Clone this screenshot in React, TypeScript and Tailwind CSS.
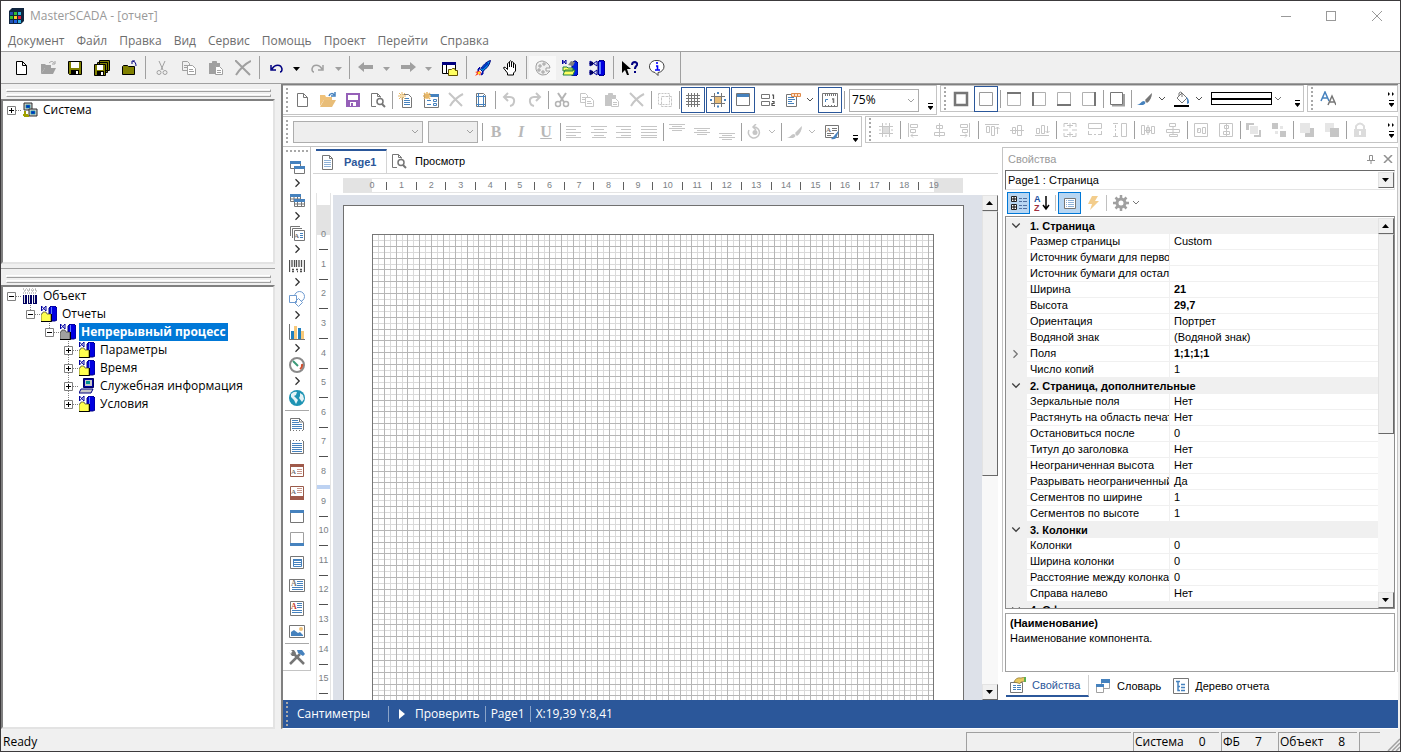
import type { ReactNode } from 'react';
import clsx from 'clsx';

const G = '#767676';
const D = '#c6c6c6';
const B = '#4682be';

const trash = (c: string) => (
    <path d="M1 1l13 13M15 2C9 5 5 9 2 14" stroke={c} strokeWidth="2" />
);
const sheet = (c: string) => <path d="M3.5 1.5h6l4 4v9h-10zM9.5 1.5v4h4" stroke={c} />;
const scissors = (c: string) => (
    <g stroke={c}>
        <path d="M4 1l6 9M12 1l-6 9" strokeWidth="2" />
        <circle cx="4" cy="12" r="2.500" strokeWidth="1.500" />
        <circle cx="12" cy="12" r="2.500" strokeWidth="1.500" />
    </g>
);
const copies = (c: string) => (
    <g stroke={c}>
        <path d="M1.5 1.5h5l2 2v7h-7zM3 5.500h4M3 7.500h4" />
        <path d="M6.500 5.500h5l3 3v6h-8z" fill="white" />
        <path d="M8 9.500h4M8 11.500h5" />
    </g>
);
const clip = (c: string) => (
    <g stroke={c}>
        <path d="M1 3h11v11H1z" fill={c} stroke="none" />
        <path d="M4.500 1.500h4v2h-4z" fill={c} />
        <path d="M7.500 6.500h4l3 3v5h-7z" fill="white" />
        <path d="M9 10.500h4M9 12.500h4" />
    </g>
);
const floppy = (c: string, body: string) => (
    <g>
        <path d="M1.500 1.500h13v13h-12l-1-1z" fill={body} stroke={c} />
        <path d="M4 2h8v6H4z" fill="white" />
        <path d="M4 10h8v4H4z" fill={c} />
        <path d="M9 11h2v3H9z" fill="white" />
    </g>
);
const brush = (c: string, tip: string) => (
    <g>
        <path d="M15 2l-5 8-2-1z" fill={c} />
        <path d="M15 2c0 4-2 8-5 10l-2-2z" fill={c} />
        <path d="M0 14c4-1 4-4 7-4 2 1 2 3-1 4z" fill={tip} />
    </g>
);
const magnifier = (
    <g stroke={G}>
        <path d="M6 14.500H1.500v-13h6l3 3v1M7.500 1.500v3h3" />
        <circle cx="10" cy="9.500" r="3" fill="white" strokeWidth="1.500" />
        <path d="M12 12l3 3" strokeWidth="2" />
    </g>
);
const cylinder = (x: number) => (
    <g>
        <path d={`M${x} 2l2-2h3l2 2v12l-2 2h-3l-2-2z`} fill="#0000e0" stroke="#000060" />
        <path d={`M${x + 2} 2v12`} stroke="#6080ff" strokeWidth="2" />
    </g>
);
const folderCyl = (fill: string) => (
    <g>
        <path d="M8 2l2-2h4l2 2v12l-2 1H8z" fill="#0000e0" stroke="#000080" />
        <path d="M10.500 1v11" stroke="#6080ff" />
        <path d="M.5 0v5l4.500-5v5z" stroke="#0000a0" />
        <path d="M0 8h1l1-2h3l1 2h4v8H0z" fill={fill} stroke="#202020" strokeWidth=".6" />
        <path d="M0 15.500h10.500V8" stroke="black" />
    </g>
);
const monitor = (x: number, y: number) => (
    <g>
        <path d={`M${x} ${y}h8v7h-8z`} fill="#c8c8c8" stroke="#303030" />
        <path d={`M${x + 2} ${y + 2}h4v3h-4z`} fill="#0030c0" stroke="#00a0a0" strokeWidth=".6" />
    </g>
);
const para = (c: string, rows: number[][]) => (
    <path d={rows.map(([x, y, w]) => `M${x} ${y + 0.5}h${w}`).join('')} stroke={c} />
);
const letter = (c: string, x = 1, y = 9, size = 8) => (
    <text x={x} y={y} fontSize={size} fontWeight="bold" fill={c} stroke="none" className="font-['Liberation_Serif',serif]">A</text>
);

const icons: Record<string, ReactNode> = {
    logo: (
        <g>
            <path d="M1 3l3-3h12v13l-3 3H1z" fill="#10253f" />
            <path d="M2 4h3v3H2zM2 12h3v3H2z" fill="#2050b0" />
            <path d="M6 4h3v3H6zM2 8h3v3H2z" fill="#30c030" />
            <path d="M10 4h3v3h-3zM10 12h3v3h-3z" fill="#30b0e0" />
            <path d="M6 8h3v3H6z" fill="#ffd020" />
            <path d="M10 8h3v3h-3z" fill="#e02040" />
            <path d="M6 12h3v3H6z" fill="#2060e0" />
        </g>
    ),
    // classic toolbar
    newFile: <path d="M3.500 1.500h6l4 4v9h-10zM9.500 1.500v4h4" stroke="black" fill="white" />,
    openGray: (
        <g>
            <path d="M1 14V4h4l1 1h5v3H5z" fill="#a0a0a0" />
            <path d="M1 14l4-6h11l-3 6z" fill="#a0a0a0" />
            <path d="M9 3c2-2 4-2 5 0m1-2v3h-3" stroke="#a0a0a0" />
        </g>
    ),
    saveOld: floppy('black', '#808000'),
    saveAll: (
        <g>
            <path d="M5.500 .5h10v10h-10zM3.500 2.500h10v10h-10z" fill="#808000" stroke="black" />
            <path d="M.5 4.500h11v11H.5z" fill="#808000" stroke="black" />
            <path d="M3 5h6v5H3z" fill="white" />
            <path d="M3 11h7v4H3z" fill="black" />
            <path d="M7 12h2v3H7z" fill="white" />
        </g>
    ),
    folderUp: (
        <g>
            <path d="M1.500 14.500v-8l1-1h4l1 1h6v8z" fill="#808000" stroke="black" />
            <path d="M15 6c0-3-1-4-3-5m-1 3V1h3" stroke="#000080" />
        </g>
    ),
    cutOld: (
        <g stroke="#a0a0a0">
            <path d="M5 1l4 9M11 1L7 10" />
            <circle cx="5" cy="12.500" r="2" />
            <circle cx="11" cy="12.500" r="2" />
        </g>
    ),
    copyOld: copies('#a0a0a0'),
    pasteOld: clip('#a0a0a0'),
    deleteOld: <path d="M0 0l15 15M16 1C10 4 5 9 1 15" stroke="#a0a0a0" strokeWidth="2" />,
    undoOld: <path d="M3 5v5h5M4 9c3-5 9-5 10 0 0 2-1 3-2 3" stroke="#000080" strokeWidth="1.500" />,
    redoOld: <path d="M13 5v5H8M12 9C9 4 3 4 2 9c0 2 1 3 2 3" stroke="#a0a0a0" strokeWidth="1.500" />,
    back: <path d="M0 7l6-5v3h9v4H6v3z" fill="#a0a0a0" />,
    forward: <path d="M16 7l-6-5v3H1v4h9v3z" fill="#a0a0a0" />,
    winFolder: (
        <g>
            <path d="M.5 2.500h13v11H.5z" fill="white" stroke="black" />
            <path d="M0 2h14v3H0z" fill="#000080" />
            <path d="M4.500 5v8" stroke="black" />
            <path d="M6.500 15.500v-6h3l1-1h2l1 2h2v5z" fill="#ffff60" stroke="#605000" />
        </g>
    ),
    rocket: (
        <g>
            <path d="M15.500 .5c-4 1-8 5-10 9l2 2c4-3 7-6 8-11z" fill="#00a0e0" stroke="#000080" />
            <path d="M5 7l-2 2v3zM8 11v3l-2 1z" fill="#0050c0" stroke="#0000a0" />
            <path d="M7 9l6-6" stroke="#0030c0" strokeWidth="2" />
            <path d="M4 11l-4 1 2 1-2 3 4-2 1 2 1-4z" fill="#ff4020" />
            <path d="M3 12h2v2H3z" fill="#ffe020" />
        </g>
    ),
    hand: (
        <path d="M5.500 8V3.500q1-1.500 2 0V7 1.500q1-1.500 2 0V7 2.500q1-1.500 2 0V8 4.500q1-1.500 2 0V11l-2 2v2h-6v-2l-4-5q0-1.500 2-.500l2 2z" fill="white" stroke="black" />
    ),
    palette: (
        <g stroke="#a0a0a0">
            <path d="M2 3q5-4 10 0 3 2 3 5h-4v3h4q-3 5-8 4Q0 13 1 6z" fill="#f0f0f0" />
            <path d="M4 5h2v2H4zM8 3h2v2H8zM3 9h2v2H3zM7 11h2v2H7z" />
        </g>
    ),
    folderCylOpen: (
        <g>
            <path d="M10 3l2-2h2l2 2v11l-2 2h-4z" fill="#0020e0" stroke="#000080" />
            <path d="M.5 0v4L4 0v4z" stroke="#0000a0" />
            <path d="M1 7h4l1 1h5v3H1zM1 15l2-5h10l-2 5z" fill="#ffff60" stroke="#208040" />
            <path d="M6 5l3-4 4 1-2 4z" fill="#808080" />
        </g>
    ),
    cylinders: (
        <g>
            {cylinder(9)}
            <path d="M1 1v5l7-5v5zM1 10v5l7-5v5z" stroke="#0000a0" />
            <circle cx="2.500" cy="3.500" r="2" fill="#000060" />
            <circle cx="2.500" cy="12.500" r="2" fill="#000060" />
        </g>
    ),
    whatsThis: (
        <g>
            <path d="M0 1v12l3-3 2 5h2L5 9h4z" fill="black" />
            <path d="M10 5q0-3 3-3 3 1 2 3-2 2-2 4m0 2v2" stroke="#000080" strokeWidth="2" />
        </g>
    ),
    info: (
        <g>
            <path d="M8 .5a6.500 6 0 0 0-2 12l3 3v-3a6.500 6 0 0 0-1-12z" fill="white" stroke="#404040" />
            <path d="M8 2v2M7 6h1.500v4M6 10h5" stroke="#0000ff" strokeWidth="1.600" />
        </g>
    ),
    // designer toolbar
    page: <path d="M2.500 1.500h6l4 4v9h-10zM8.500 1.500v4h4" stroke={G} />,
    open: (
        <g>
            <path d="M0 14V3h5l1 2h6v3H4z" fill="#f0c27a" />
            <path d="M0 15l4-7h12l-4 7z" fill="#e8bd78" />
            <path d="M9 4c1-3 4-3 5-1m1-3v4h-4" stroke={B} strokeWidth="1.500" />
        </g>
    ),
    save: (
        <g>
            <path d="M2 2h12v12H2z" stroke="#9560b8" strokeWidth="2" />
            <path d="M2 8h12v6H2z" fill="#9560b8" />
            <path d="M5 10h6v4H5z" fill="white" />
            <path d="M6 11h2v3H6z" fill="#9560b8" />
        </g>
    ),
    preview: magnifier,
    newPage: (
        <g>
            <path d="M4.500 2.500h6l3 3v10h-9z" stroke={G} fill="white" />
            {para(B, [[6, 6, 5], [6, 8, 6], [6, 10, 6], [6, 12, 6]])}
            <path d="M4 0v8M0 4h8M1 1l6 6M7 1L1 7" stroke="#e8b765" />
            <circle cx="4" cy="4" r="1.500" fill="#f7dca8" />
        </g>
    ),
    newForm: (
        <g>
            <path d="M1.500 15.500v-13h14v13z" stroke={G} fill="white" />
            <path d="M7 2h9v3H7z" fill={B} />
            <path d="M4 8.500h4M4 12.500h4M10.500 7.500h3v2h-3zM10.500 11.500h3v2h-3z" stroke={B} />
            <path d="M4 0v7M0 4h8M1 1l6 6M7 1L1 7" stroke="#e8b765" strokeWidth="1.500" />
        </g>
    ),
    trash: trash(D),
    pageSetup: (
        <g>
            <path d="M3.500 1.500h7l2 2v11h-9z" stroke={G} />
            <path d="M5.500 1v14M10.500 3v12M3 4.500h10M3 12.500h10" stroke={B} />
        </g>
    ),
    undo: <path d="M7 1L3 5l4 4M3 5h6c6 0 5 8 0 9" stroke={D} strokeWidth="2" />,
    redo: <path d="M10 1l4 4-4 4M14 5H8c-6 0-5 8 0 9" stroke={D} strokeWidth="2" />,
    cut: scissors('#b4b4b4'),
    copy: copies(D),
    paste: clip(D),
    select: (
        <g stroke={D} strokeDasharray="2 1">
            <path d="M1.500 1.500h11v11h-11z" />
            <path d="M4.500 4.500h10v10h-10z" strokeDasharray="3 1" />
        </g>
    ),
    grid: <path d="M3.500 1v14M6.500 1v14M9.500 1v14M12.500 1v14M1 3.500h14M1 6.500h14M1 9.500h14M1 12.500h14" stroke={G} />,
    snap: (
        <g>
            <path d="M4.500 4.500h7v7h-7z" fill="#e8bd78" stroke={G} />
            <path d="M4.500 1v14M11.500 1v14M1 4.500h14M1 11.500h14" stroke={G} />
            <path d="M7 1h2M7 14.500h2M1 7v2M15 7v2" stroke={B} strokeWidth="2" />
        </g>
    ),
    headers: (
        <g>
            <path d="M1.500 1.500h13v12h-13z" stroke={G} />
            <path d="M2 2h12v3H2z" fill={B} />
        </g>
    ),
    order: (
        <g>
            <path d="M1.500 2.500h8v4h-8zM1.500 9.500h8v4h-8z" stroke={G} />
            <path d="M12 3h1.500v4M12 9.500h2v2h-2v2h3" stroke="#505050" strokeWidth="1.200" />
        </g>
    ),
    format: (
        <g>
            <path d="M1.500 2.500h10v12h-10z" stroke={G} />
            {para(B, [[3, 5, 6], [3, 7, 7], [3, 9, 4], [3, 11, 6]])}
            <path d="M6.500 1.500h9v3h-9zM9.500 1v3M12.500 1v3" stroke="#e08a4a" fill="#fde3cd" />
        </g>
    ),
    ruler: (
        <g>
            <path d="M.5 1.500h15v13H.5z" stroke={G} />
            <path d="M3.500 2v2M5.500 2v2M7.500 2v2M9.500 2v2M11.500 2v2M13.500 2v2M3.500 14v-1M6.500 14v-1M9.500 14v-1M12.500 14v-1" stroke={G} />
            <path d="M3.500 10V7.500H6" stroke={B} />
            <path d="M10 7h1.500v4" stroke={G} strokeWidth="1.500" />
        </g>
    ),
    bAll: <path d="M2 2h12v12H2z" stroke={G} strokeWidth="2.500" />,
    bNone: <path d="M1.500 1.500h13v13h-13z" stroke="#9a9a9a" />,
    bTop: <g><path d="M1.500 2.500h13v12h-13z" stroke="#b0b0b0" /><path d="M1 2h14" stroke={G} strokeWidth="2" /></g>,
    bLeft: <g><path d="M2.500 1.500h12v13h-12z" stroke="#b0b0b0" /><path d="M2 1v14" stroke={G} strokeWidth="2" /></g>,
    bBottom: <g><path d="M1.500 1.500h13v12h-13z" stroke="#b0b0b0" /><path d="M1 14h14" stroke={G} strokeWidth="2" /></g>,
    bRight: <g><path d="M1.500 1.500h12v13h-12z" stroke="#b0b0b0" /><path d="M14 1v14" stroke={G} strokeWidth="2" /></g>,
    bShadow: <g><path d="M3 14.500h12V3" stroke="#a0a0a0" strokeWidth="2" /><path d="M1.500 1.500h12v12h-12z" stroke={G} /></g>,
    brush: brush(G, B),
    brushOff: brush(D, D),
    bucket: (
        <g>
            <path d="M3 7l5-5 5 5-5 5zM5 5V2q2-2 3 0v4" stroke={G} />
            <path d="M12 6q3 1 3 6l-2 1q1-4-1-7z" fill={B} />
            <path d="M0 14h15v2H0z" fill="black" />
        </g>
    ),
    fonts: (
        <g strokeWidth="1.500">
            <path d="M1 10l4-9 4 9M2.500 7h5" stroke={B} />
            <path d="M8 14l4-9 4 9M9.500 11h5" stroke={G} />
        </g>
    ),
    left: para(D, [[0, 2, 15], [0, 5, 10], [0, 8, 15], [0, 11, 10], [0, 13, 15]]),
    center: para(D, [[0, 2, 16], [3, 5, 10], [0, 8, 16], [3, 11, 10], [1, 13, 14]]),
    right: para(D, [[0, 2, 15], [5, 5, 10], [0, 8, 15], [5, 11, 10], [0, 13, 15]]),
    justify: para(D, [[0, 2, 16], [0, 5, 16], [0, 8, 16], [0, 11, 16], [0, 13, 16]]),
    vTop: para(D, [[0, 0, 16], [3, 2, 10], [0, 4, 16], [3, 6, 10]]),
    vMid: para(D, [[0, 4, 16], [3, 6, 10], [0, 8, 16], [3, 10, 10]]),
    vBottom: para(D, [[0, 9, 16], [3, 11, 10], [0, 13, 16], [3, 15, 10]]),
    rotate: (
        <g>
            <path d="M7 3a5.500 5.500 0 1 1-5 3M9 0L6 3l3 3" stroke={D} strokeWidth="1.500" />
            <circle cx="8" cy="8.500" r="2.500" fill={D} />
        </g>
    ),
    style: (
        <g>
            <path d="M1.500 1.500h13v12h-13z" stroke={G} />
            {letter(G, 2, 8, 7)}
            {para(G, [[8, 4, 5], [8, 6, 5], [3, 9, 7], [3, 11, 4]])}
            <path d="M15 6l-5 6-3 3q5 1 6-3z" fill={B} />
        </g>
    ),
    alignGrid: (
        <g stroke={D}>
            <path d="M4.500 4.500h7v7h-7z" fill="#dddddd" />
            <path d="M4.500 1v14M11.500 1v14M1 4.500h14M1 11.500h14M8 1v2M8 13v2M1 8h2M13 8h2" />
        </g>
    ),
    aLeft: <path d="M2.500 1v14M4.500 2.500h7v3h-7zM4.500 7.500h5v3h-5zM12 13.500H5l2-2m-2 2l2 2" stroke={D} />,
    aCenter: <path d="M8.500 1v14M5.500 3.500h6v3h-6zM3.500 10.500h10v3h-10z" stroke={D} />,
    aRight: <path d="M13.500 1v14M4.500 2.500h7v3h-7zM6.500 7.500h5v3h-5zM4 13.500h7l-2-2m2 2l-2 2" stroke={D} />,
    aTop: <path d="M1 2.500h14M2.500 4.500h3v6h-3zM7.500 4.500h3v9h-3zM13.500 12V5m-2 2l2-2 2 2" stroke={D} />,
    aMid: <path d="M1 8.500h14M3.500 5.500h3v6h-3zM8.500 3.500h4v10h-4z" stroke={D} />,
    aBottom: <path d="M1 13.500h14M2.500 6.500h3v5h-3zM7.500 3.500h3v8h-3zM13.500 4v7m-2-2l2 2 2-2" stroke={D} />,
    sizeBoth: <path d="M2 5V1.500h4M10 1.500h4V5M2 11v3.500h4M10 14.500h4V11M8 1v5M5 3.500h6M1 8h5M10 8h5M8 10v5M5 12.500h6" stroke={D} />,
    sizeW: <path d="M1.500 1.500h13v5h-13zM1.500 9v4M14.500 9v4M2 12.500h3M7 12.500h2M11 12.500h3" stroke={D} />,
    sizeH: <path d="M9.500 1.500h5v13h-5zM1 1.500h5M1 14.500h5M3.500 3v3M3.500 7v2M3.500 11v3" stroke={D} />,
    spaceH: <path d="M1.500 3.500h3v9h-3zM6.500 5.500h3v5h-3zM11.500 4.500h3v7h-3zM4 8.500h7M8 3v10" stroke={D} />,
    spaceV: <path d="M4.500 1.500h6v3h-6zM1.500 7.500h13v3h-13zM4.500 12.500h8v2h-8zM8 5v7" stroke={D} />,
    ctrH: <path d="M1.500 1.500h13v13h-13zM4 8h2M4.500 6.500h3v4h-3zM9.500 5.500h3v6h-3z" stroke={D} />,
    ctrV: <path d="M1.500 1.500h13v13h-13zM6.500 3.500h4v3h-4zM5.500 9.500h6v3h-6zM8.500 2v12" stroke={D} />,
    toFront: <g><path d="M0 1h8v2H3v5H0z" fill={D} /><path d="M4 4h8v8H4z" fill="#e6e6e6" /><path d="M14 8v6H8" stroke={D} strokeWidth="2" /></g>,
    toBack: <g><path d="M1 1h6v6H1zM9 9h6v6H9z" fill={D} /><path d="M9 4h3v3H9zM4 9h3v3H4z" fill="#e6e6e6" /></g>,
    fwd: <g><path d="M8 6h7v9H6v-3z" fill={D} /><path d="M1 1h10v10H1z" fill="#e6e6e6" /></g>,
    bwd: <g><path d="M1 1h9v9H1z" fill="#e6e6e6" /><path d="M6 6h9v9H6z" fill={D} /></g>,
    lock: (
        <g>
            <path d="M4 7V4q4-5 8 0v3" stroke="#dcdcdc" strokeWidth="2" />
            <path d="M2 7h12v8H2z" fill="#dcdcdc" />
            <path d="M8 9v4" stroke="white" strokeWidth="2" />
        </g>
    ),
    // toolbox
    bands: (
        <g>
            <path d="M1.500 2.500h10v7h-10z" stroke={G} fill="white" />
            <path d="M1 2h11v3H1z" fill={B} />
            <path d="M5.500 7.500h10v7h-10z" stroke={G} fill="white" />
            <path d="M5 7h11v3H5z" fill={B} />
        </g>
    ),
    crossTab: (
        <g>
            <path d="M1.500 2.500h10v7h-10zM5 4v5M8.500 4v5M1 7h10" stroke={G} fill="white" />
            <path d="M1 2h11v3H1z" fill={B} />
            <path d="M5.500 7.500h10v7h-10zM8.500 8v6M12.500 8v6M5 12h10" stroke={G} fill="white" />
            <path d="M5 7h11v3H5z" fill={B} />
        </g>
    ),
    components: (
        <g>
            <path d="M1.500 11V1.500H11M3.500 13V3.500H13" stroke={G} />
            <path d="M5.500 5.500h10v10h-10z" stroke={G} fill="white" />
            {letter(G, 5, 13, 7)}
            {para(B, [[11, 8, 3], [11, 10, 3], [11, 12, 3]])}
        </g>
    ),
    barcode: <path d="M.5 2v12M3 2v7M5.500 2v7M7.500 2v7M10 2v7M12.500 2v7M15.500 2v12M3 11.500h2M7 11.500h2M11 11.500h2M3 13.500h2M8 13.500h1M11 13.500h2" stroke="#505050" strokeWidth="1.300" />,
    shapes: (
        <g stroke="#6f9bd0" fill="white">
            <circle cx="10.500" cy="5.500" r="5" />
            <path d="M.5 4.500h7v7h-7zM9.500 7.500l4 4-4 4-4-4z" />
        </g>
    ),
    chart: (
        <g>
            <path d="M.5 0v15.500H16" stroke={G} />
            <path d="M2 7h3v8H2zM9 4h3v11H9z" fill="#2080c0" />
            <path d="M5 2h3v13H5zM12 7h3v8h-3z" fill="#f8c97a" />
        </g>
    ),
    gauge: (
        <g>
            <circle cx="8" cy="8" r="7" stroke="#8a8a8a" strokeWidth="2" fill="white" />
            <path d="M13 7a5 5 0 0 1-2 5" stroke="#d05030" strokeWidth="2" />
            <path d="M4 4l5 5" stroke="#3a9a78" strokeWidth="2" />
        </g>
    ),
    globe: (
        <g>
            <circle cx="8" cy="8" r="8" fill="#1e94b4" />
            <path d="M2 4q3-3 6-2l-1 3-2 1 2 2 2 2-2 4-2-4-3-3zM11 3l3 2 1 4-2 3-3-4 1-2z" fill="#e4f3f7" />
        </g>
    ),
    bandHead: <g><path d="M1.500 14V2.500h9l4 4V14M1 14.500h1M4 14.500h1M7 14.500h1M10 14.500h1M13 14.500h1M10.500 2v4h4" stroke={G} />{para(B, [[3, 4, 6], [3, 6, 7], [3, 8, 10], [3, 10, 10], [3, 12, 10]])}</g>,
    bandData: <g><path d="M1.500 2v12.500h13V2M1 1.500h1M4 1.500h1M7 1.500h1M10 1.500h1M13 1.500h1" stroke={G} />{para(B, [[3, 4, 10], [3, 6, 10], [3, 8, 10], [3, 10, 10], [3, 12, 10]])}</g>,
    groupHead: <g><path d="M1.500 2.500h13v12h-13z" stroke="#9a5a4a" /><path d="M1 2h14v3H1z" fill="#a05a4a" />{letter(G, 2, 12, 7)}{para('#c8988c', [[8, 7, 5], [8, 9, 5], [8, 11, 5]])}</g>,
    groupFoot: <g><path d="M1.500 1.500h13v12h-13z" stroke="#9a5a4a" /><path d="M1 11h14v4H1z" fill="#a05a4a" />{letter(G, 2, 9, 7)}{para('#c8988c', [[8, 3, 5], [8, 5, 5], [8, 7, 5]])}</g>,
    pageHead: <g><path d="M1.500 2.500h13v12h-13z" stroke={G} /><path d="M1 2h14v3H1z" fill={B} /></g>,
    pageFoot: <g><path d="M1.500 1.500h13v12h-13z" stroke="#a0a0a0" /><path d="M1 12h14v3H1z" fill={B} /></g>,
    panel: <g><path d="M1.500 2.500h13v12h-13z" stroke={G} /><path d="M4.500 5.500h8v7h-8zM5 8.500h7M5 10.500h7" stroke={B} /><path d="M4 5h9v2H4z" fill={B} /></g>,
    text: <g><path d="M.5 2.500h15v12H.5z" stroke={G} />{letter(G, 2, 9, 8)}{para(B, [[8, 4, 6], [8, 6, 6], [8, 8, 6], [3, 10, 11], [3, 12, 11]])}</g>,
    richText: <g><path d="M1.500 1.500h13v14h-13z" stroke={G} />{letter('#c84030', 2, 9, 8)}{para(B, [[8, 3, 5], [8, 5, 5], [8, 7, 5], [3, 10, 10], [3, 12, 10]])}</g>,
    image: <g><path d="M.5 2.500h15v12H.5z" stroke={G} /><path d="M2 13v-4l3-2 4 3 2-1 3 3v1z" fill={B} /><circle cx="12" cy="6" r="2" fill="#f0c27a" /></g>,
    tools: (
        <g>
            <path d="M3 3l12 12" stroke={G} strokeWidth="2.500" />
            <path d="M0 3l2 2 2-2-2-2h3l2 3-1 3H3z" fill={G} />
            <path d="M1 15L11 5" stroke={G} strokeWidth="2.500" />
            <path d="M8 1h5l3 4-2 2-5-3z" fill={B} />
        </g>
    ),
    pageLines: <g><path d="M2.500 1.500h7l3 3v11h-10zM9.500 1.500v3h3" stroke={G} />{para('#8fb2d8', [[4, 6, 7], [4, 8, 7], [4, 10, 7], [4, 12, 7]])}</g>,
    // property grid
    categorized: (
        <g>
            <path d="M.5 1.500h5v5h-5zM.5 9.500h5v5h-5z" stroke="#202020" fill="white" />
            <path d="M1 4h4M3 2v4M1 12h4M3 10v4" stroke="black" />
            <path d="M8 3.500h3M12 3.500h4M8 6.500h3M12 6.500h4M8 10.500h3M12 10.500h4M8 13.500h3M12 13.500h4" stroke="#5070a0" />
        </g>
    ),
    sortAz: (
        <g>
            <text x="0" y="7" fontSize="9" fontWeight="bold" fill="#2050a0" stroke="none">A</text>
            <text x="0" y="16" fontSize="9" fontWeight="bold" fill="#a03040" stroke="none">Z</text>
            <path d="M12 1v13m-3-4l3 4 3-4" stroke="black" strokeWidth="1.500" />
        </g>
    ),
    props: <g><path d="M2.500 3.500h11v10h-11z" stroke={G} fill="white" />{para('#8fb2d8', [[4, 5, 1], [6, 5, 6], [4, 7, 1], [6, 7, 6], [4, 9, 1], [6, 9, 6], [4, 11, 1], [6, 11, 6]])}</g>,
    bolt: <path d="M7 1h6l-3 5h4L5 15l2-6H3z" fill="#f3cd8c" />,
    gear: (
        <g stroke="#a0a0a0">
            <circle cx="8" cy="8" r="4" strokeWidth="3" />
            <path d="M8 0v3M8 13v3M0 8h3M13 8h3M2.500 2.500l2 2M11.500 11.500l2 2M13.500 2.500l-2 2M4.500 11.500l-2 2" strokeWidth="2.500" />
        </g>
    ),
    tabProps: (
        <g>
            <path d="M.5 5.500h12v10H.5z" stroke={G} fill="white" />
            {para(B, [[3, 8, 3], [7, 8, 4], [3, 10, 3], [7, 10, 4], [3, 12, 3], [7, 12, 4]])}
            <path d="M4 5q2-5 7-4l4-1v4l-4 1q-1 3-3 1z" fill="#e8c860" stroke="#8a7430" strokeWidth=".7" />
            <path d="M14 0h2v5h-2z" fill="#60b050" />
        </g>
    ),
    dictionary: (
        <g>
            <path d="M6.500 1.500h8v9h-8z" stroke="#a0a0a0" fill="white" />
            <path d="M6 1h9v4H6z" fill={B} />
            <path d="M1.500 6.500h7v8h-7z" stroke="#a0a0a0" fill="white" />
            <path d="M1 6h8v3H1z" fill={B} />
        </g>
    ),
    treeTab: (
        <g>
            <path d="M.5 .5h15v15H.5z" stroke={G} />
            <path d="M3 3.500h4M5 4v8.500h2M5 8.500h2M8 6.500h4M8 9.500h4M8 12.500h4" stroke={B} strokeWidth="1.500" />
        </g>
    ),
    // trees
    network: (
        <g>
            {monitor(2, 1)}
            {monitor(7, 7)}
            <path d="M3 9v5h4M1 13h5" stroke="#a0a000" strokeWidth="2" />
        </g>
    ),
    plant: (
        <g>
            <path d="M1 7h4v9H1zM6 7h4v9H6zM11 7h4v9h-4z" fill="#000060" />
            <path d="M2.500 7v8M7.500 7v8M12.500 7v8" stroke="#e0e0e0" />
            <path d="M1 1h1M4 0h1M7 1h1M10 0h1M13 1h1M2 3h2M6 3h2M10 3h2M14 3h1M1 5h13M3 2h12" stroke="#909090" strokeDasharray="1 1" />
        </g>
    ),
    objFolder: folderCyl('#ffff50'),
    objFolderGray: folderCyl('#a0a0a0'),
    computer: (
        <g>
            <path d="M4.500 .5h10v9h-10z" fill="#0000a0" stroke="#000060" />
            <path d="M6 2h7v6H6z" fill="#c8c8c8" />
            <path d="M7 3h4v3H7z" fill="#009090" />
            <path d="M2 11h12l-2 4H0z" fill="#c8c8c8" stroke="#000080" />
        </g>
    ),
};

function Icon({ name }: { name: string }) {
    return (
        <svg viewBox="0 0 16 16" fill="none" className="h-4 w-4 shrink-0" aria-hidden="true">
            {icons[name]}
        </svg>
    );
}

function Chevron({ color = G, className = 'h-2 w-2' }: { color?: string; className?: string }) {
    return (
        <svg viewBox="0 0 8 8" fill="none" className={clsx('shrink-0', className)} aria-hidden="true">
            <path d="M1 2l3 3 3-3" stroke={color} />
        </svg>
    );
}

function Triangle({ up, color = 'black' }: { up?: boolean; color?: string }) {
    return (
        <svg viewBox="0 0 8 4" className="h-1 w-2" aria-hidden="true">
            <path d={up ? 'M0 4h7L3.500 0z' : 'M0 0h7L3.500 4z'} fill={color} />
        </svg>
    );
}

/* ---------- classic application toolbar ---------- */

const mainTools = [
    'newFile', 'openGray', 'saveOld', 'saveAll', 'folderUp', '|',
    'cutOld', 'copyOld', 'pasteOld', 'deleteOld', '|',
    'undoOld', 'v', 'redoOld', 'v-', '|',
    'back', 'v-', 'forward', 'v-', 'winFolder', '|',
    'rocket', 'hand', '|',
    'palette', 'folderCylOpen', 'cylinders', '|',
    'whatsThis', 'info',
];

function MainToolbar() {
    return (
        <div className="flex h-[33px] shrink-0 items-center border-y border-t-[#a0a0a0] border-b-[#a0a0a0] bg-[#f0f0f0] pl-1.5">
            {mainTools.map((t, i) => {
                if (t === '|') {
                    return (
                        <span key={i} className="flex w-1.5 justify-center">
                            <span className="h-[23px] w-px bg-[#a0a0a0]" />
                        </span>
                    );
                }
                if (t[0] === 'v' && t.length < 3) {
                    return (
                        <button key={i} aria-label="menu" className="flex h-6 w-[15px] items-center justify-center pt-0.5">
                            <Triangle color={t === 'v' ? 'black' : '#a0a0a0'} />
                        </button>
                    );
                }
                return (
                    <button
                        key={i}
                        aria-label={t}
                        className={clsx('flex h-6 w-[27px] items-center justify-center', t === 'palette' && 'bg-[#f8f8f8]')}
                    >
                        <Icon name={t} />
                    </button>
                );
            })}
            <span className="ml-2.5 h-full w-px bg-[#a0a0a0]" />
        </div>
    );
}

/* ---------- designer toolbars ---------- */

function Grip() {
    return (
        <span className="mx-[3px] flex h-6 w-0.5 shrink-0 flex-col justify-between">
            {[0, 1, 2, 3, 4, 5].map((n) => (
                <span key={n} className="h-0.5 w-0.5 bg-[#a8a8a8]" />
            ))}
        </span>
    );
}

function Sep() {
    return (
        <span className="flex w-[3px] shrink-0 justify-center">
            <span className="h-[18px] w-px bg-[#a0a0a0]" />
        </span>
    );
}

function Tools({ items, active = [] }: { items: string[]; active?: string[] }) {
    return (
        <>
            {items.map((t, i) => {
                if (t === '|') return <Sep key={i} />;
                if (t === 'v' || t === 'v-') {
                    return (
                        <button key={i} aria-label="more" className="flex h-6 w-3 shrink-0 items-center justify-start">
                            <Chevron color={t === 'v' ? '#505050' : '#b8b8b8'} />
                        </button>
                    );
                }
                return (
                    <button
                        key={i}
                        aria-label={t}
                        className={clsx(
                            'mr-px flex h-[26px] w-6 shrink-0 items-center justify-center border',
                            active.includes(t) ? 'border-[#2b579a]' : 'border-transparent',
                        )}
                    >
                        <Icon name={t} />
                    </button>
                );
            })}
        </>
    );
}

function Overflow({ more }: { more?: boolean }) {
    return (
        <button aria-label="overflow" className="ml-auto flex w-3 shrink-0 flex-col items-center gap-1 self-end pb-1">
            {more && (
                <svg viewBox="0 0 7 4" className="h-1 w-[7px]" aria-hidden="true">
                    <path d="M0 0l2 2-2 2zM4 0l2 2-2 2z" fill="black" />
                </svg>
            )}
            <svg viewBox="0 0 7 7" className="h-[7px] w-[7px]" aria-hidden="true">
                <path d="M1 0h5v1H1zM1 3h5v1L3.500 7 1 4z" fill="black" />
            </svg>
        </button>
    );
}

function Bar({ className, children }: { className: string; children: ReactNode }) {
    return <div className={clsx('flex items-center border border-[#c4c4c4] bg-white', className)}>{children}</div>;
}

function Letter({ children, className }: { children: string; className: string }) {
    return (
        <button className={clsx("mr-px h-6 w-6 font-['Liberation_Serif',serif] text-[16px] leading-6 text-[#b8b8b8]", className)}>
            {children}
        </button>
    );
}

function FontSelect({ label, className }: { label: string; className: string }) {
    return (
        <span className={clsx('relative h-[22px] shrink-0', className)}>
            <select aria-label={label} className="h-full w-full appearance-none border border-[#adadad] bg-[#eeeeee]" />
            <Chevron color="#a0a0a0" className="pointer-events-none absolute top-[7px] right-1 h-2 w-2" />
        </span>
    );
}

function DesignerToolbars() {
    return (
        <div className="flex shrink-0 flex-col gap-px">
            <div className="flex items-start gap-[3px]">
                <Bar className="h-[30px] w-[654px] border-l-0">
                    <Grip />
                    <Tools
                        items={[
                            'page', 'open', 'save', 'preview', '|', 'newPage', 'newForm', 'trash', 'pageSetup', '|',
                            'undo', 'redo', '|', 'cut', 'copy', 'paste', 'trash', '|', 'select', '|',
                            'grid', 'snap', 'headers', 'order', 'format', 'v', 'ruler', '|',
                        ]}
                        active={['grid', 'snap', 'headers', 'ruler']}
                    />
                    <span className="relative ml-[3px] h-[23px] w-[70px] shrink-0">
                        <select aria-label="Zoom" className="h-full w-full appearance-none border border-[#adadad] px-0.5 font-['Open_Sans',sans-serif] text-[12px] leading-5 text-black">
                            <option>75%</option>
                        </select>
                        <Chevron color="#a0a0a0" className="pointer-events-none absolute top-2 right-1 h-2 w-2" />
                    </span>
                    <Overflow />
                </Bar>
                <Bar className="h-[27px] w-[364px]">
                    <Grip />
                    <Tools
                        items={['bAll', 'bNone', '|', 'bTop', 'bLeft', 'bBottom', 'bRight', '|', 'bShadow', '|', 'brush', 'v', 'bucket', 'v']}
                        active={['bNone']}
                    />
                    <button aria-label="line style" className="ml-1 flex h-[13px] w-[61px] items-center border border-black">
                        <span className="h-0.5 w-full bg-black" />
                    </button>
                    <Chevron className="ml-0.5 h-2 w-2" />
                    <Overflow />
                </Bar>
                <Bar className="h-[27px] flex-1">
                    <Grip />
                    <Tools items={['fonts']} />
                    <Overflow more />
                </Bar>
            </div>
            <div className="flex items-start gap-[3px]">
                <Bar className="h-[31px] w-[579px] border-l-0">
                    <Grip />
                    <FontSelect label="Font" className="ml-0.5 w-[130px]" />
                    <FontSelect label="Size" className="mr-[3px] ml-[5px] w-[50px]" />
                    <Sep />
                    <Letter className="font-bold">B</Letter>
                    <Letter className="font-bold italic">I</Letter>
                    <Letter className="font-bold underline">U</Letter>
                    <Tools
                        items={[
                            '|', 'left', 'center', 'right', 'justify', '|', 'vTop', 'vMid', 'vBottom', '|',
                            'rotate', 'v-', '|', 'brushOff', 'v-', 'style',
                        ]}
                    />
                    <Overflow />
                </Bar>
                <Bar className="h-[27px] flex-1">
                    <Grip />
                    <Tools
                        items={[
                            'alignGrid', '|', 'aLeft', 'aCenter', 'aRight', '|', 'aTop', 'aMid', 'aBottom', '|',
                            'sizeBoth', 'sizeW', 'sizeH', '|', 'spaceH', 'spaceV', '|', 'ctrH', 'ctrV', '|',
                            'toFront', 'toBack', '|', 'fwd', 'bwd', '|', 'lock',
                        ]}
                    />
                    <Overflow more />
                </Bar>
            </div>
        </div>
    );
}

const toolboxGroups = ['bands', 'crossTab', 'components', 'barcode', 'shapes', 'chart', 'gauge'];
const toolboxItems = ['bandHead', 'bandData', 'groupHead', 'groupFoot', 'pageHead', 'pageFoot', 'panel', 'text', 'richText', 'image'];

function ToolboxButton({ name }: { name: string }) {
    return (
        <button aria-label={name} className="flex h-[23px] w-full items-center justify-center">
            <Icon name={name} />
        </button>
    );
}

function Toolbox() {
    return (
        <div className="flex w-7 shrink-0 flex-col items-center self-start border border-t-0 border-l-0 border-[#c4c4c4] pb-0.5">
            <span className="my-[3px] flex h-0.5 w-[22px] justify-between">
                {[0, 1, 2, 3, 4, 5].map((n) => (
                    <span key={n} className="h-0.5 w-0.5 bg-[#a8a8a8]" />
                ))}
            </span>
            {toolboxGroups.map((name) => (
                <div key={name} className="w-full">
                    <ToolboxButton name={name} />
                    <span className="flex h-2.5 items-center justify-center pl-0.5">
                        <Chevron color="#303030" className="h-2.5 w-2.5 -rotate-90" />
                    </span>
                </div>
            ))}
            <ToolboxButton name="globe" />
            <span className="my-px h-px w-6 bg-[#a8a8a8]" />
            {toolboxItems.map((name) => (
                <ToolboxButton key={name} name={name} />
            ))}
            <span className="my-px h-px w-6 bg-[#a8a8a8]" />
            <ToolboxButton name="tools" />
        </div>
    );
}

/* ---------- scroll bars ---------- */

function ScrollBar({ thumb }: { thumb: string }) {
    const button = 'flex h-4 w-4 shrink-0 items-center justify-center border border-t-[#e3e3e3] border-r-[#696969] border-b-[#696969] border-l-[#e3e3e3] bg-[#f0f0f0]';
    return (
        <div className="flex w-4 shrink-0 flex-col bg-[#f8f8f8]">
            <button aria-label="up" className={button}><Triangle up /></button>
            <div className="min-h-0 flex-1">
                <div className={clsx('border border-t-[#e3e3e3] border-r-[#696969] border-b-[#696969] border-l-[#e3e3e3] bg-[#f0f0f0]', thumb)} />
            </div>
            <button aria-label="down" className={button}><Triangle /></button>
        </div>
    );
}

/* ---------- report page ---------- */

const STEP = 562 / 95;

function PageGrid() {
    const cols = Array.from({ length: 96 }, (_, i) => i);
    const rows = Array.from({ length: 139 }, (_, i) => i);
    return (
        <svg className="block h-[820px] w-[562px]" shapeRendering="crispEdges" aria-hidden="true">
            {[1, 0].map((odd) => (
                <g key={odd} fill={odd ? '#dadada' : '#b6b6b6'}>
                    {cols.filter((i) => i % 2 === odd).map((i) => (
                        <rect key={`c${i}`} x={Math.round(i * STEP)} y="0" width="1" height="820" />
                    ))}
                    {rows.filter((i) => i % 2 === odd).map((i) => (
                        <rect key={`r${i}`} x="0" y={Math.round(i * STEP)} width="562" height="1" />
                    ))}
                </g>
            ))}
            <rect x="0" y="0" width="562" height="1" fill="#767676" />
            <rect x="0" y="0" width="1" height="820" fill="#767676" />
            <rect x="561" y="0" width="1" height="820" fill="#767676" />
        </svg>
    );
}

function HorizontalRuler() {
    return (
        <div className="ml-[30px] flex h-[15px] w-[620px] shrink-0 border-y border-[#e4e4e4] font-['Liberation_Sans',sans-serif] text-[9px] text-[#7b7f86]">
            <span className="w-[29px] bg-[#e3e3e3]" />
            <div className="flex flex-1 items-center justify-between">
                {Array.from({ length: 39 }, (_, i) => (
                    <span key={i} className="flex w-0 justify-center">
                        {i % 2 === 0 ? <span className="relative">{i / 2}</span> : <span className="h-2 w-px shrink-0 bg-[#606060]" />}
                    </span>
                ))}
            </div>
            <span className="w-[29px] bg-[#e3e3e3]" />
        </div>
    );
}

function VerticalRuler() {
    return (
        <div className="mr-0.5 ml-[3px] w-[15px] shrink-0 overflow-hidden border-x border-[#e4e4e4] font-['Liberation_Sans',sans-serif] text-[9px] text-[#7b7f86]">
            <div className="mt-3 h-[30px] bg-[#e3e3e3]" />
            <div className="flex h-[814px] flex-col items-center justify-between">
                {Array.from({ length: 56 }, (_, i) => (
                    <span key={i} className={clsx('flex h-0 w-full items-center justify-center', i === 17 && 'outline-2 outline-[#bdd2f2]')}>
                        {i % 2 === 0 ? i / 2 : <span className="h-px w-[9px] shrink-0 bg-[#505050]" />}
                    </span>
                ))}
            </div>
        </div>
    );
}

function Editor() {
    return (
        <div className="flex min-w-0 flex-1 flex-col pl-0.5">
            <div className="flex h-[27px] shrink-0 items-end border-b border-[#d4d4d4] pl-[3px] font-['Liberation_Sans',sans-serif] text-[11px]">
                <button className="flex h-6 w-[71px] items-center gap-2 border-t-2 border-r border-t-[#2b579a] border-r-[#d4d4d4] pl-1 font-bold text-[#2b579a]">
                    <Icon name="pageLines" />
                    Page1
                </button>
                <button className="flex h-6 items-center gap-2 pl-1 text-black">
                    <Icon name="preview" />
                    Просмотр
                </button>
            </div>
            <div className="flex min-h-0 flex-1 flex-col pt-1">
                <HorizontalRuler />
                <div className="flex min-h-0 flex-1">
                    <VerticalRuler />
                    <div className="mt-0.5 flex min-w-0 flex-1">
                        <div className="min-w-0 flex-1 overflow-hidden bg-[#dde1e9] pt-2.5 pl-2.5">
                            <div className="h-[878px] w-[621px] border border-[#707070] bg-white pt-7 pl-7">
                                <PageGrid />
                            </div>
                        </div>
                        <ScrollBar thumb="h-[56%]" />
                    </div>
                </div>
            </div>
        </div>
    );
}

/* ---------- property panel ---------- */

type Row = { name: string; value?: string; bold?: boolean; group?: boolean; expandable?: boolean };

const properties: Row[] = [
    { name: '1. Страница', group: true },
    { name: 'Размер страницы', value: 'Custom' },
    { name: 'Источник бумаги для первой страницы', value: '' },
    { name: 'Источник бумаги для остальных страниц', value: '' },
    { name: 'Ширина', value: '21', bold: true },
    { name: 'Высота', value: '29,7', bold: true },
    { name: 'Ориентация', value: 'Портрет' },
    { name: 'Водяной знак', value: '(Водяной знак)' },
    { name: 'Поля', value: '1;1;1;1', bold: true, expandable: true },
    { name: 'Число копий', value: '1' },
    { name: '2. Страница, дополнительные', group: true },
    { name: 'Зеркальные поля', value: 'Нет' },
    { name: 'Растянуть на область печати', value: 'Нет' },
    { name: 'Остановиться после', value: '0' },
    { name: 'Титул до заголовка', value: 'Нет' },
    { name: 'Неограниченная высота', value: 'Нет' },
    { name: 'Разрывать неограниченный', value: 'Да' },
    { name: 'Сегментов по ширине', value: '1' },
    { name: 'Сегментов по высоте', value: '1' },
    { name: '3. Колонки', group: true },
    { name: 'Колонки', value: '0' },
    { name: 'Ширина колонки', value: '0' },
    { name: 'Расстояние между колонками', value: '0' },
    { name: 'Справа налево', value: 'Нет' },
    { name: '4. Оформление', group: true },
];

function PropertyTable() {
    return (
        <table className="w-full table-fixed border-separate border-spacing-0 text-left leading-[15px]">
            <colgroup>
                <col className="w-[21px]" />
                <col className="w-[143px]" />
                <col />
            </colgroup>
            <tbody>
                {properties.map((p) =>
                    p.group ? (
                        <tr key={p.name} className="h-4 bg-[#f0f0f0]">
                            <td className="p-0 pl-[5px]"><Chevron color="#404040" className="h-2.5 w-2.5" /></td>
                            <th colSpan={2} className="truncate p-0 pt-px pl-[3px] font-bold">{p.name}</th>
                        </tr>
                    ) : (
                        <tr key={p.name} className="h-4">
                            <td className="bg-[#f0f0f0] p-0 pl-[5px]">
                                {p.expandable && <Chevron className="h-2.5 w-2.5 -rotate-90" />}
                            </td>
                            <td className="overflow-hidden border-r border-b border-[#f0f0f0] p-0 pl-[3px] whitespace-nowrap">{p.name}</td>
                            <td className={clsx('border-b border-[#f0f0f0] p-0 pl-1', p.bold && 'font-bold')}>{p.value}</td>
                        </tr>
                    ),
                )}
            </tbody>
        </table>
    );
}

function PropertyTool({ name, active }: { name: string; active?: boolean }) {
    return (
        <button
            aria-label={name}
            className={clsx('flex h-[22px] w-[23px] items-center justify-center border', active ? 'border-[#0078d7] bg-[#b8d6f2]' : 'border-transparent')}
        >
            <Icon name={name} />
        </button>
    );
}

function PropertyPanel() {
    return (
        <section className="ml-1 flex w-[396px] shrink-0 flex-col font-['Liberation_Sans',sans-serif] text-[11px] text-black">
            <div className="flex min-h-0 flex-1 flex-col border border-b-0 border-[#c4c4c4] px-0.5">
                <header className="flex h-[22px] shrink-0 items-center justify-between pr-0.5 pl-[3px] text-[#9a9a9a]">
                    <h2>Свойства</h2>
                    <span className="flex items-center gap-2">
                        <button aria-label="Pin">
                            <svg viewBox="0 0 8 9" fill="none" className="h-[9px] w-2" aria-hidden="true">
                                <path d="M2.500 5V.5h3V5M0 5.500h8M4 6v3" stroke="#909090" />
                            </svg>
                        </button>
                        <button aria-label="Close">
                            <svg viewBox="0 0 10 8" className="h-2 w-2.5" aria-hidden="true">
                                <path d="M1 0l8 8M9 0L1 8" stroke="#909090" strokeWidth="1.500" />
                            </svg>
                        </button>
                    </span>
                </header>
                <span className="relative shrink-0">
                    <select aria-label="Component" className="h-5 w-full appearance-none border border-t-[#696969] border-r-[#e3e3e3] border-b-[#e3e3e3] border-l-[#696969] px-0.5">
                        <option>Page1 : Страница</option>
                    </select>
                    <span className="pointer-events-none absolute top-0.5 right-px flex h-4 w-4 items-center justify-center border border-t-[#e3e3e3] border-r-[#696969] border-b-[#696969] border-l-[#e3e3e3] bg-[#f0f0f0]">
                        <Triangle />
                    </span>
                </span>
                <div className="flex h-[26px] shrink-0 items-center pl-0.5">
                    <PropertyTool name="categorized" active />
                    <PropertyTool name="sortAz" />
                    <span className="mx-0.5 h-4 w-px bg-[#c0c0c0]" />
                    <PropertyTool name="props" active />
                    <PropertyTool name="bolt" />
                    <span className="mx-0.5 h-4 w-px bg-[#c0c0c0]" />
                    <PropertyTool name="gear" />
                    <Chevron />
                </div>
                <div className="flex min-h-0 flex-1 border border-[#8c8c8c] pt-px">
                    <div className="min-w-0 flex-1 overflow-hidden"><PropertyTable /></div>
                    <ScrollBar thumb="h-[56%]" />
                </div>
                <div className="mt-1 h-[59px] shrink-0 border border-[#a0a0a0] px-1 pt-0.5 leading-[15px]">
                    <p className="font-bold">(Наименование)</p>
                    <p>Наименование компонента.</p>
                </div>
            </div>
            <nav className="flex h-7 shrink-0 items-start gap-4 pt-[3px] pl-1">
                <button className="-mr-2.5 flex h-[22px] w-[83px] items-center gap-1.5 border-r border-b-2 border-r-[#d0d0d0] border-b-[#2b579a] pl-1 text-[#2b579a]">
                    <Icon name="tabProps" />
                    Свойства
                </button>
                <button className="flex h-[22px] items-center gap-1.5"><Icon name="dictionary" />Словарь</button>
                <button className="-ml-1 flex h-[22px] items-center gap-1.5"><Icon name="treeTab" />Дерево отчета</button>
            </nav>
        </section>
    );
}

/* ---------- project trees ---------- */

interface Node {
    label: string;
    icon: string;
    depth: number;
    open?: boolean;
    last?: boolean;
    selected?: boolean;
}

const objectTree: Node[] = [
    { label: 'Объект', icon: 'plant', depth: 0, open: true, last: true },
    { label: 'Отчеты', icon: 'objFolder', depth: 1, open: true, last: true },
    { label: 'Непрерывный процесс', icon: 'objFolderGray', depth: 2, open: true, last: true, selected: true },
    { label: 'Параметры', icon: 'objFolder', depth: 3 },
    { label: 'Время', icon: 'objFolder', depth: 3 },
    { label: 'Служебная информация', icon: 'computer', depth: 3 },
    { label: 'Условия', icon: 'objFolder', depth: 3, last: true },
];

function TreeRow({ node }: { node: Node }) {
    return (
        <li className="flex h-[18px] items-center">
            {Array.from({ length: node.depth }, (_, i) => (
                <span key={i} className="w-[19px] shrink-0" />
            ))}
            <svg viewBox="0 0 19 18" fill="none" className="h-[18px] w-[19px] shrink-0" aria-hidden="true">
                <path
                    d={`M13 9.500h6${node.depth ? 'M8.500 0v5' : ''}${node.last ? '' : 'M8.500 14v4'}`}
                    stroke="#808080"
                    strokeDasharray="1 1"
                />
                <path d="M4.500 5.500h8v8h-8z" stroke="#808080" />
                <path d={node.open ? 'M6 9.500h5' : 'M6 9.500h5M8.500 7v5'} stroke="black" />
            </svg>
            <Icon name={node.icon} />
            <span className={clsx('ml-[3px] px-0.5 leading-[18px] whitespace-nowrap', node.selected && 'bg-[#0078d7] font-bold text-white')}>
                {node.label}
            </span>
        </li>
    );
}

function TreePanel({ nodes, className }: { nodes: Node[]; className: string }) {
    return (
        <div className={clsx('flex flex-col', className)}>
            <div className="flex h-[13px] shrink-0 flex-col justify-center gap-0.5 pr-1 pl-[5px]">
                <span className="h-[3px] border border-t-white border-r-[#a0a0a0] border-b-[#a0a0a0] border-l-white" />
                <span className="h-[3px] border border-t-white border-r-[#a0a0a0] border-b-[#a0a0a0] border-l-white" />
            </div>
            <ul className="flex-1 border-2 border-t-[#808080] border-r-[#e3e3e3] border-b-[#e3e3e3] border-l-[#808080] bg-white">
                {nodes.map((n) => <TreeRow key={n.label} node={n} />)}
            </ul>
        </div>
    );
}

function StatusCell({ className, children }: { className: string; children?: ReactNode }) {
    return (
        <span className={clsx('flex h-[19px] items-center border-t border-l border-[#a0a0a0] pl-px', className)}>
            {children}
        </span>
    );
}

export default function App() {
    const menu = ['Документ', 'Файл', 'Правка', 'Вид', 'Сервис', 'Помощь', 'Проект', 'Перейти', 'Справка'];
    return (
        <div className="flex h-screen flex-col overflow-hidden border border-[#3c3a3c] bg-[#f0f0f0] font-['Open_Sans',sans-serif] text-[12px] text-black">
            <header className="flex h-[30px] shrink-0 items-center bg-white pl-[7px] text-[#999999]">
                <Icon name="logo" />
                <h1 className="ml-1.5 flex-1">MasterSCADA - [отчет]</h1>
                <button aria-label="Minimize" className="flex w-[45px] justify-center"><span className="h-px w-2.5 bg-[#999999]" /></button>
                <button aria-label="Maximize" className="flex w-[45px] justify-center"><span className="h-2.5 w-2.5 border border-[#999999]" /></button>
                <button aria-label="Close" className="flex w-[47px] justify-center">
                    <svg viewBox="0 0 10 10" className="h-2.5 w-2.5" aria-hidden="true">
                        <path d="M0 0l10 10M10 0L0 10" stroke="#999999" />
                    </svg>
                </button>
            </header>
            <nav className="flex h-5 shrink-0 items-center gap-3 bg-white pl-[7px] text-[#6d6d6d]">
                {menu.map((m) => <button key={m}>{m}</button>)}
            </nav>
            <MainToolbar />

            <div className="flex min-h-0 flex-1">
                <aside className="flex w-[274px] shrink-0 flex-col pt-0.5">
                    <TreePanel className="h-[180px] shrink-0 pb-0.5" nodes={[{ label: 'Система', icon: 'network', depth: 0, last: true }]} />
                    <div className="mt-0.5 h-px bg-[#a0a0a0]" />
                    <TreePanel className="min-h-0 flex-1 pt-[3px]" nodes={objectTree} />
                </aside>

                <main className="mr-0.5 ml-1.5 flex min-w-0 flex-1 flex-col border-t border-b border-l-2 border-[#808080] border-b-white bg-white">
                    <DesignerToolbars />
                    <div className="flex min-h-0 flex-1">
                        <Toolbox />
                        <Editor />
                        <PropertyPanel />
                    </div>
                    <footer className="flex h-7 shrink-0 items-center bg-[#2b579a] text-white">
                        <Grip />
                        <span className="ml-1.5 w-[91px]">Сантиметры</span>
                        <span className="h-4 w-px bg-[#8aa3c8]" />
                        <button className="ml-2.5 flex items-center gap-2.5">
                            <svg viewBox="0 0 6 10" className="h-2.5 w-1.5" aria-hidden="true"><path d="M0 0l6 5-6 5z" fill="white" /></svg>
                            Проверить
                        </button>
                        <span className="mx-[5px] h-4 w-px bg-[#8aa3c8]" />
                        <span>Page1</span>
                        <span className="mx-[5px] h-4 w-px bg-[#8aa3c8]" />
                        <span>X:19,39 Y:8,41</span>
                    </footer>
                </main>
            </div>

            <footer className="flex h-[22px] shrink-0 items-end gap-0.5 pl-0.5">
                <span className="flex-1 leading-[19px]">Ready</span>
                <StatusCell className="w-[165px]" />
                <StatusCell className="w-[86px] gap-[15px]"><span>Система</span><span>0</span></StatusCell>
                <StatusCell className="w-[55px] gap-[15px]"><span>ФБ</span><span>7</span></StatusCell>
                <StatusCell className="w-[79px] gap-[15px]"><span>Объект</span><span>8</span></StatusCell>
                <StatusCell className="w-[21px]" />
                <svg viewBox="0 0 18 18" className="h-[18px] w-[18px]" aria-hidden="true">
                    <path d="M6 18L18 6M10 18l8-8M14 18l4-4" stroke="#a0a0a0" strokeWidth="1.500" />
                </svg>
            </footer>
        </div>
    );
}
